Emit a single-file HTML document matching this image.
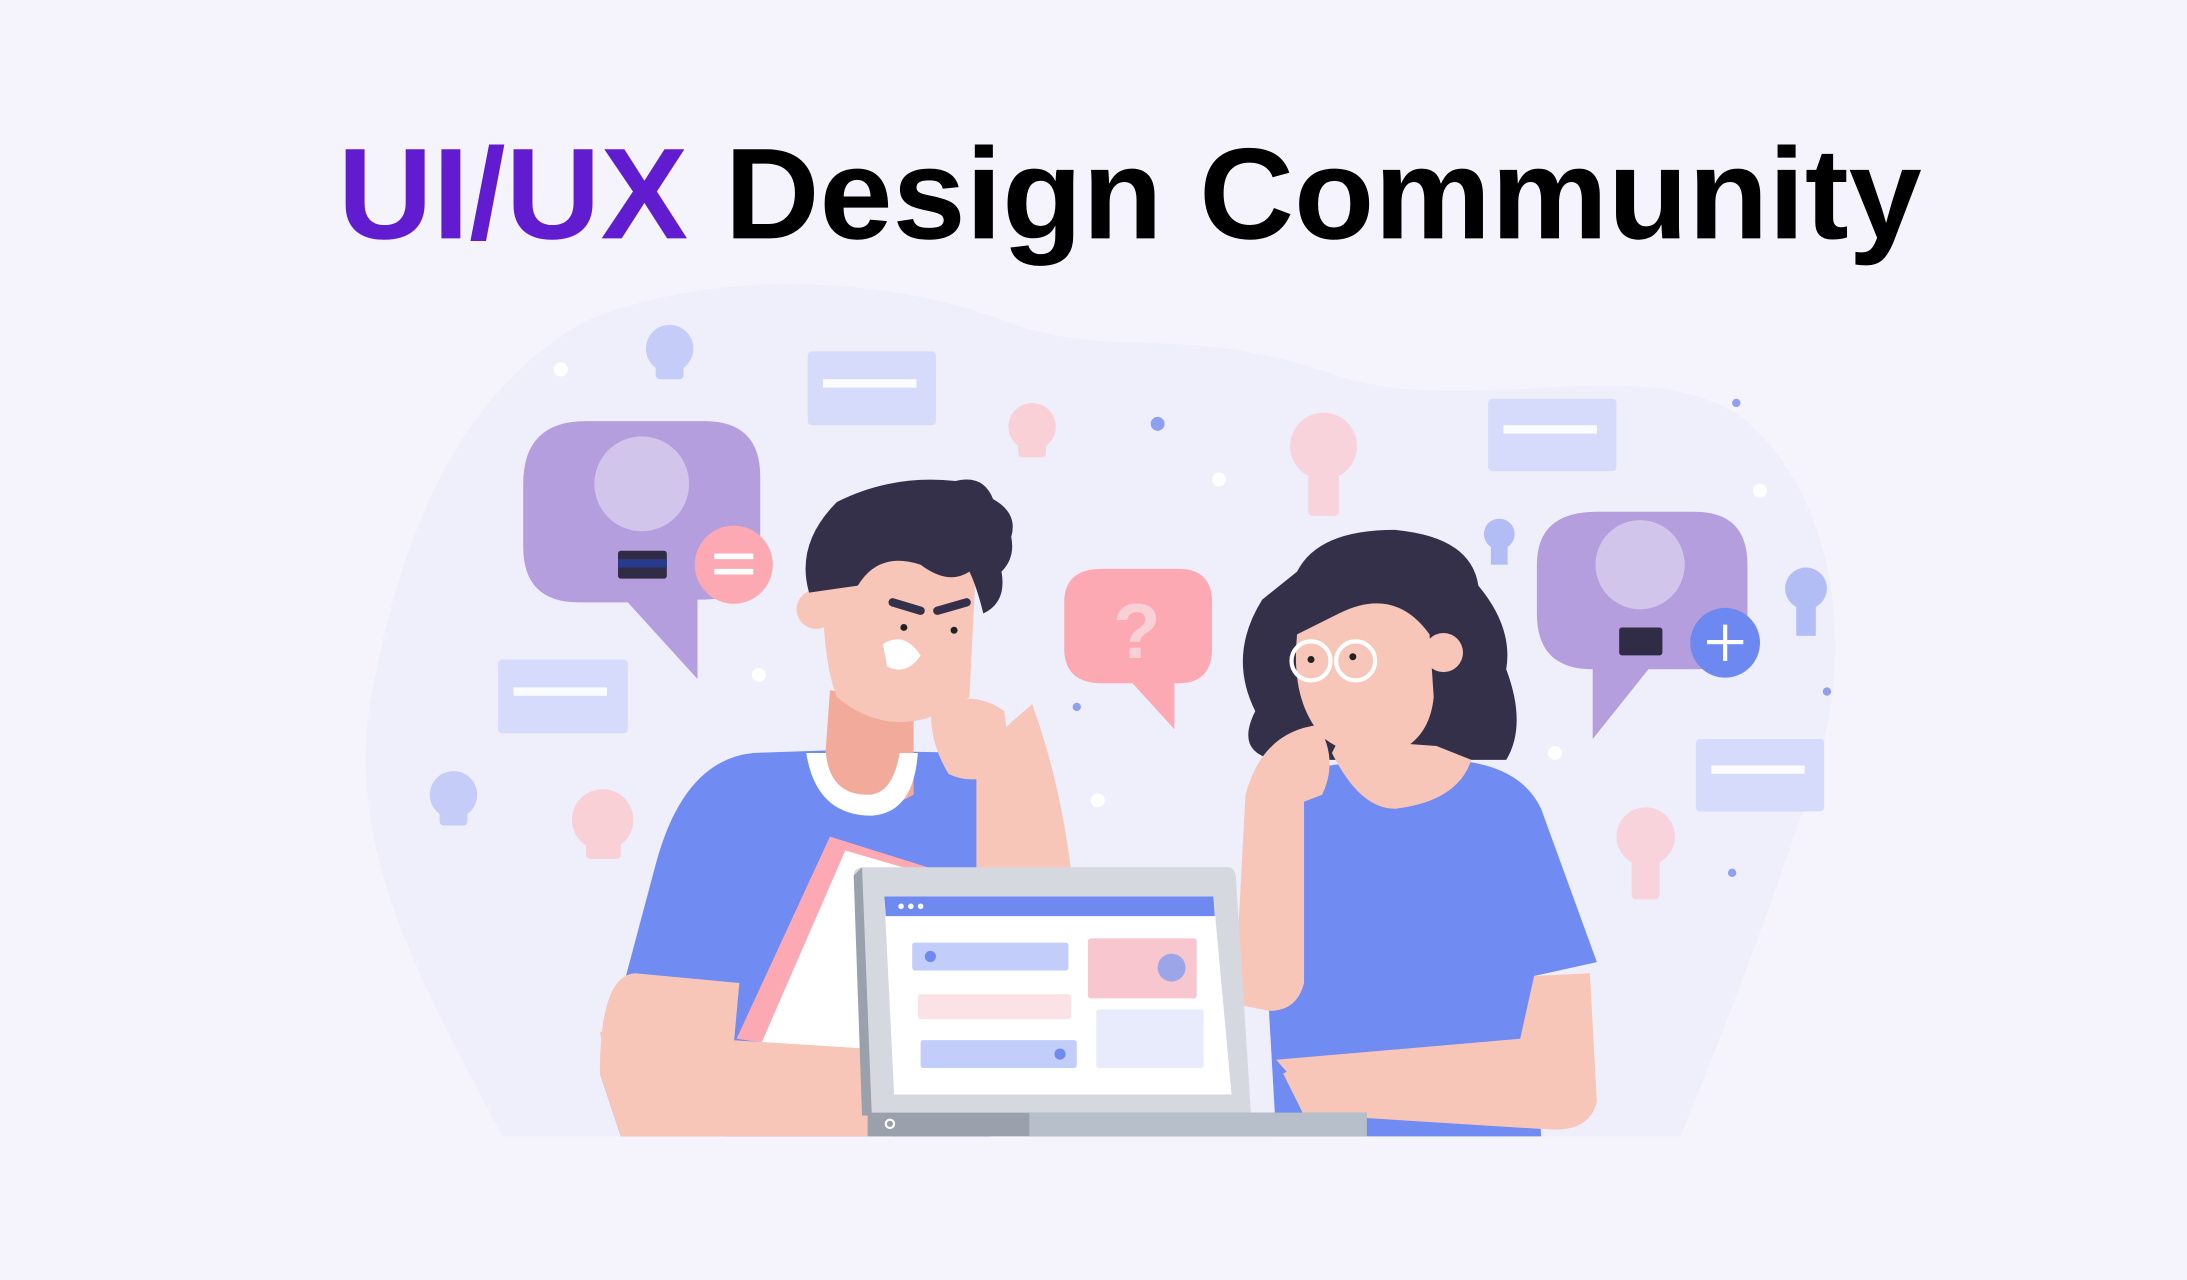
<!DOCTYPE html>
<html><head><meta charset="utf-8"><style>
html,body{margin:0;padding:0;background:#F5F4FD;}
body{width:2187px;height:1280px;position:relative;overflow:hidden;font-family:"Liberation Sans",sans-serif;}
svg{position:absolute;left:0;top:0;}
</style></head><body>
<svg width="2187" height="1280" viewBox="0 0 1568 918" xmlns="http://www.w3.org/2000/svg">
<rect width="1568" height="918" fill="#F5F4FD"/>
<path d="M360 815 C300 700 240 600 270 480 C290 380 330 280 420 230 C520 190 640 200 720 230 C800 260 850 230 960 270 C1060 300 1180 250 1250 300 C1320 360 1330 470 1300 560 C1270 650 1240 730 1205 815 Z" fill="#EFEEFB"/>
<text x="242" y="171" font-family="Liberation Sans" font-weight="bold" font-size="93" textLength="1136" lengthAdjust="spacingAndGlyphs"><tspan fill="#611CD0">UI/UX</tspan><tspan fill="#000"> Design Community</tspan></text>
<g fill="#D6DBFB">
<rect x="579" y="252" width="92" height="53" rx="3"/>
<rect x="1067" y="286" width="92" height="52" rx="3"/>
<rect x="357" y="473" width="93" height="53" rx="3"/>
<rect x="1216" y="530" width="92" height="52" rx="3"/>
</g>
<g fill="#fff" opacity=".9">
<rect x="590" y="272" width="67" height="6"/><rect x="1078" y="305" width="67" height="6"/>
<rect x="368" y="493" width="67" height="6"/><rect x="1227" y="549" width="67" height="6"/>
</g>
<g fill="#C5CCF8"><circle cx="480" cy="250" r="17"/><rect x="470" y="258" width="20" height="14" rx="3"/>
<circle cx="325" cy="570" r="17"/><rect x="315" y="578" width="20" height="14" rx="3"/></g>
<g fill="#F9D0D6"><circle cx="740" cy="306" r="17"/><rect x="730" y="314" width="20" height="14" rx="3"/>
<circle cx="432" cy="588" r="22"/><rect x="420" y="598" width="25" height="18" rx="3"/></g>
<g fill="#F8D3DB"><circle cx="949" cy="320" r="24"/><rect x="938" y="340" width="22" height="30" rx="3"/>
<circle cx="1180" cy="600" r="21"/><rect x="1170" y="615" width="20" height="30" rx="3"/></g>
<g fill="#B2BDF6"><circle cx="1075" cy="383" r="11"/><rect x="1069" y="390" width="12" height="15"/>
<circle cx="1295" cy="422" r="15"/><rect x="1288" y="432" width="14" height="24"/></g>
<g fill="#fff"><circle cx="402" cy="265" r="5"/><circle cx="544" cy="484" r="5"/><circle cx="874" cy="344" r="5"/><circle cx="787" cy="574" r="5"/><circle cx="1115" cy="540" r="5"/><circle cx="1262" cy="352" r="5"/></g>
<g fill="#8FA0EE"><circle cx="830" cy="304" r="5"/><circle cx="772" cy="507" r="3"/><circle cx="1245" cy="289" r="3"/><circle cx="1310" cy="496" r="3"/><circle cx="1242" cy="626" r="3"/></g>
<path d="M420 302 H505 Q545 302 545 342 V390 Q545 430 505 430 H500 V487 L450 432 H415 Q375 432 375 392 V347 Q375 302 420 302Z" fill="#B49EDD"/>
<circle cx="460" cy="347" r="34" fill="#D2C5EC"/>
<rect x="443" y="395" width="35" height="20" rx="2" fill="#302C45"/><rect x="443" y="401" width="35" height="6" fill="#273A8C"/>
<circle cx="526" cy="405" r="28" fill="#FDA9B3"/>
<rect x="512" y="397" width="28" height="4" fill="#fff"/><rect x="512" y="408" width="28" height="4" fill="#fff"/>
<path d="M1145 367 H1215 Q1253 367 1253 405 V445 Q1253 480 1215 480 H1182 L1142 530 V480 Q1102 480 1102 440 V405 Q1102 367 1145 367Z" fill="#B49EDD"/>
<circle cx="1176" cy="405" r="32" fill="#D2C5EC"/>
<rect x="1161" y="450" width="31" height="20" rx="2" fill="#302C45"/>
<circle cx="1237" cy="461" r="25" fill="#6D89F1"/>
<rect x="1224" y="459" width="26" height="3" fill="#fff"/><rect x="1235.5" y="448" width="3" height="26" fill="#fff"/>
<path d="M790 408 H845 Q869 408 869 432 V465 Q869 490 845 490 H842 V523 L812 490 H790 Q763 490 763 465 V432 Q763 408 790 408Z" fill="#FDA9B3"/>
<text x="815" y="472" font-family="Liberation Sans" font-weight="bold" font-size="56" fill="#F8D0D6" text-anchor="middle">?</text>
<!-- MAN -->
<path d="M445 815 L430 770 L470 620 Q490 545 540 540 L600 538 L700 540 L710 815 Z" fill="#708BF2"/>
<path d="M430 770 Q430 700 455 698 L530 705 L520 815 H445 Z" fill="#F7C6B9"/>
<path d="M595 495 L655 505 L655 570 Q620 590 590 565Z" fill="#F2AB9A"/>
<path d="M578 540 Q585 585 625 585 Q655 583 658 540 L645 540 Q640 570 622 570 Q595 570 592 540Z" fill="#fff"/>
<path d="M590 400 Q588 470 600 500 Q630 525 665 515 L695 500 L700 400 Z" fill="#F7C6B9"/>
<circle cx="585" cy="437" r="14" fill="#F7C6B9"/>
<path d="M580 425 Q570 390 600 360 Q640 340 685 345 Q705 340 712 358 Q730 368 725 385 Q728 400 718 410 Q722 432 705 440 Q700 420 695 410 Q680 420 660 405 Q630 395 615 420 Z" fill="#35304A"/>
<path d="M640 432 L660 438 M672 438 L693 432" stroke="#35304A" stroke-width="6" stroke-linecap="round"/>
<circle cx="648" cy="450" r="2.5" fill="#222"/><circle cx="684" cy="452" r="2.5" fill="#222"/>
<path d="M633 462 Q648 452 660 470 Q650 485 636 478Z" fill="#fff"/>
<path d="M700 540 L740 505 Q760 560 768 625 L700 640Z" fill="#F7C6B9"/>
<path d="M668 505 Q700 495 720 510 L725 550 Q700 565 680 555 Q665 530 668 505Z" fill="#F7C6B9"/>
<path d="M595 600 L665 622 L630 760 L528 745 Z" fill="#FDA9B3"/>
<path d="M606 610 L668 628 L640 760 L545 750 Z" fill="#fff"/>
<path d="M430 740 L620 752 L640 815 H445 Z" fill="#F7C6B9"/>
<!-- WOMAN -->
<path d="M905 560 Q975 540 1040 545 Q1090 548 1105 580 L1145 690 L1100 700 L1105 815 H915 L905 640Z" fill="#708BF2"/>
<path d="M905 430 Q880 470 900 510 Q885 540 915 545 L1080 545 Q1095 520 1080 480 Q1085 450 1060 420 Q1055 385 1000 380 Q945 380 930 410Z" fill="#35304A"/>
<path d="M930 455 Q925 505 950 530 Q975 548 1000 540 Q1025 530 1028 500 L1025 455 Q1000 420 960 440 Z" fill="#F7C6B9"/>
<circle cx="1035" cy="468" r="14" fill="#F7C6B9"/>
<path d="M955 540 Q975 580 1000 580 Q1045 575 1055 545 L1030 535 L960 530Z" fill="#F7C6B9"/>
<circle cx="940" cy="474" r="14" fill="none" stroke="#fff" stroke-width="3"/><circle cx="972" cy="474" r="14" fill="none" stroke="#fff" stroke-width="3"/>
<circle cx="940" cy="473" r="2.5" fill="#222"/><circle cx="970" cy="471" r="2.5" fill="#222"/>
<path d="M885 720 L893 570 Q905 525 945 520 Q960 545 948 570 L935 575 L935 705 Q930 725 910 725 Z" fill="#F7C6B9"/>
<path d="M915 760 L1090 745 L1100 700 L1140 698 L1145 790 Q1140 812 1110 810 L950 800 Z" fill="#F7C6B9"/>
<path d="M920 770 Q945 755 985 765 L980 800 L935 800Z" fill="#F7C6B9"/>
<!-- laptop -->
<path d="M612 628 Q612 622 620 622 H880 Q885 622 886 628 L897 800 H625 Z" fill="#D6D8DF"/>
<path d="M612 628 L618 622 L625 800 H618 Z" fill="#9AA0AC"/>
<path d="M634 643 H870 L883 785 H641 Z" fill="#fff"/>
<path d="M634 643 H870 L871 657 H635 Z" fill="#6E8AF1"/>
<g fill="#fff"><circle cx="646" cy="650" r="2"/><circle cx="653" cy="650" r="2"/><circle cx="660" cy="650" r="2"/></g>
<rect x="654" y="676" width="112" height="20" rx="2" fill="#C2CDF9"/>
<rect x="658" y="713" width="110" height="18" rx="2" fill="#FBE2E6"/>
<rect x="660" y="746" width="112" height="20" rx="2" fill="#C2CDF9"/>
<rect x="780" y="673" width="78" height="43" rx="2" fill="#F7C6CE"/>
<circle cx="840" cy="694" r="10" fill="#9AA6E8"/>
<rect x="786" y="724" width="77" height="42" rx="2" fill="#E7EBFC"/>
<circle cx="667" cy="686" r="4" fill="#6E8AF1"/><circle cx="760" cy="756" r="4" fill="#6E8AF1"/>
<path d="M622 798 H980 V815 H622Z" fill="#9AA0AC"/>
<path d="M738 798 H980 V815 H738Z" fill="#B7BFCB"/>
<circle cx="638" cy="806" r="3" fill="none" stroke="#fff" stroke-width="1.5"/>
</svg>
</body></html>
